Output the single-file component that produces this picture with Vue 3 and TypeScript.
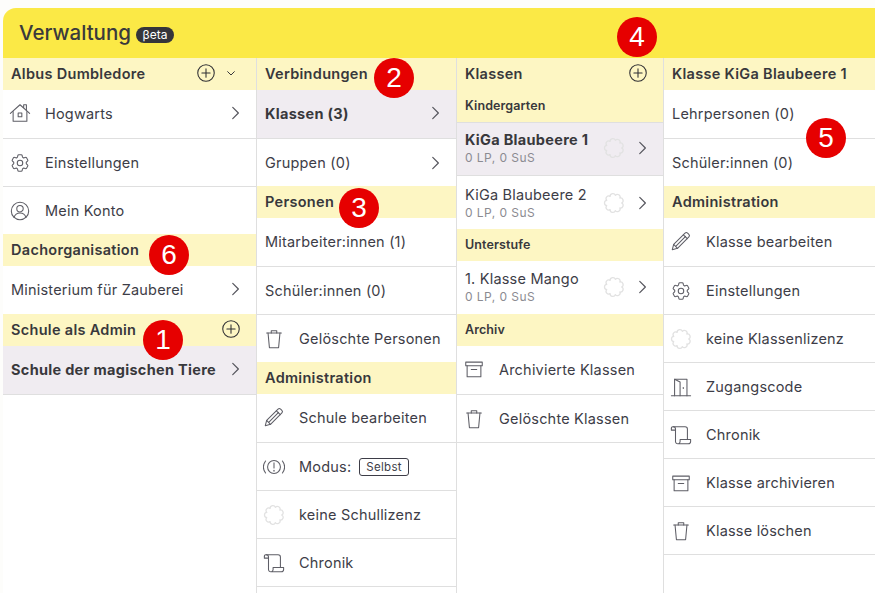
<script setup lang="ts">
import { h } from 'vue';
import type { FunctionalComponent } from 'vue';

interface Row {
  label: string;
  icon?: string;
  chevron?: boolean;
  selected?: boolean;
  sub?: string;
  seal?: boolean;
  tag?: string;
}

interface Block {
  title: string;
  small?: boolean;
  add?: boolean;
  collapse?: boolean;
  rows?: Row[];
}

// scalloped ring used for the "no licence" marker
function sealPath(): string {
  const count = 9;
  const r = 8.4;
  let d = '';
  for (let i = 0; i <= count; i++) {
    const a = (i / count) * Math.PI * 2;
    const x = (12 + r * Math.cos(a)).toFixed(2);
    const y = (12 + r * Math.sin(a)).toFixed(2);
    d += i === 0 ? `M${x} ${y}` : `A2.9 2.9 0 0 1 ${x} ${y}`;
  }
  return d + 'Z';
}

const icons: Record<string, string[]> = {
  home: ['M1.5 12.5 12 3l10.5 9.5', 'M4.5 10.5V21h15V10.5', 'M10 12h4v4h-4z', 'M16 6V3h3v6'],
  gear: [
    'M9.594 3.94c.09-.542.56-.94 1.11-.94h2.593c.55 0 1.02.398 1.11.94l.213 1.281c.063.374.313.686.645.87.074.04.147.083.22.127.325.196.72.257 1.075.124l1.217-.456a1.125 1.125 0 0 1 1.37.49l1.296 2.247a1.125 1.125 0 0 1-.26 1.431l-1.003.827c-.293.241-.438.613-.43.992a7.723 7.723 0 0 1 0 .255c-.008.378.137.75.43.991l1.004.827c.424.35.534.955.26 1.43l-1.298 2.247a1.125 1.125 0 0 1-1.369.491l-1.217-.456c-.355-.133-.75-.072-1.076.124a6.47 6.47 0 0 1-.22.128c-.331.183-.581.495-.644.869l-.213 1.281c-.09.543-.56.94-1.11.94h-2.594c-.55 0-1.019-.398-1.11-.94l-.213-1.281c-.062-.374-.312-.686-.644-.87a6.52 6.52 0 0 1-.22-.127c-.325-.196-.72-.257-1.076-.124l-1.217.456a1.125 1.125 0 0 1-1.369-.49l-1.297-2.247a1.125 1.125 0 0 1 .26-1.431l1.004-.827c.292-.24.437-.613.43-.991a6.932 6.932 0 0 1 0-.255c.007-.38-.138-.751-.43-.992l-1.004-.827a1.125 1.125 0 0 1-.26-1.43l1.297-2.247a1.125 1.125 0 0 1 1.37-.491l1.216.456c.356.133.751.072 1.076-.124.072-.044.146-.086.22-.128.332-.183.582-.495.644-.869l.214-1.28Z',
    'M15 12a3 3 0 1 1-6 0 3 3 0 0 1 6 0Z',
  ],
  user: [
    'M21.5 12a9.5 9.5 0 1 1-19 0 9.5 9.5 0 0 1 19 0Z',
    'M15.5 9.5a3.5 3.5 0 1 1-7 0 3.5 3.5 0 0 1 7 0Z',
    'M5.5 19c1-3.2 3.5-4.8 6.5-4.8s5.5 1.6 6.5 4.8',
  ],
  trash: ['M4 5.5h16', 'M9 5.5V3h6v2.5', 'M5.5 5.5 7 21.5h10l1.5-16'],
  pencil: [
    'M2.5 21.5 4 15.8 16.4 3.4a2 2 0 0 1 2.8 0l1.4 1.4a2 2 0 0 1 0 2.8L8.2 20z',
    'M14.6 5.2l4.2 4.2',
    'M4 15.8 8.2 20',
    'M6.5 17.5 17 7',
  ],
  alert: [
    'M19 12a7 7 0 1 1-14 0 7 7 0 0 1 14 0Z',
    'M12 7.5v5.5',
    'M12 15.5v1',
    'M2.8 5.5a11 11 0 0 0 0 13',
    'M21.2 5.5a11 11 0 0 1 0 13',
  ],
  scroll: [
    'M1.5 4.5v2.2H6',
    'M1.5 4.5A1.6 1.6 0 0 1 3 3h13.5a2.5 2.5 0 0 1 2.5 2.5V17',
    'M3.5 3A2.5 2.5 0 0 1 6 5.5V19a2.5 2.5 0 0 0 2.5 2.5H20a2.5 2.5 0 0 0 2.5-2.5v-2H11v2a2.5 2.5 0 0 1-2.5 2.5',
  ],
  archive: ['M3 4.5h18v4H3z', 'M4.5 8.5v12h15v-12', 'M9 12.5h6'],
  door: ['M1.5 21.5h21', 'M5 21.5V3.5h13.5v18', 'M11 21.5V6.5l-6-3', 'M14.5 12.5v1'],
  plus: ['M21 12a9 9 0 1 1-18 0 9 9 0 0 1 18 0Z', 'M12 7.5v9', 'M7.5 12h9'],
  right: ['M9 4.5 16.5 12 9 19.5'],
  down: ['M7 10l5 5 5-5'],
  seal: [sealPath()],
};

const Icon: FunctionalComponent<{ name: string; size?: number }> = (props) =>
  h(
    'svg',
    {
      viewBox: '0 0 24 24',
      width: props.size ?? 22,
      height: props.size ?? 22,
      fill: 'none',
      stroke: 'currentColor',
      'stroke-width': 1.15,
      'stroke-linecap': 'round',
      'stroke-linejoin': 'round',
    },
    (icons[props.name] ?? []).map((d) => h('path', { d })),
  );

const columns: Block[][] = [
  [
    {
      title: 'Albus Dumbledore',
      add: true,
      collapse: true,
      rows: [
        { label: 'Hogwarts', icon: 'home', chevron: true },
        { label: 'Einstellungen', icon: 'gear' },
        { label: 'Mein Konto', icon: 'user' },
      ],
    },
    { title: 'Dachorganisation', rows: [{ label: 'Ministerium für Zauberei', chevron: true }] },
    {
      title: 'Schule als Admin',
      add: true,
      rows: [{ label: 'Schule der magischen Tiere', chevron: true, selected: true }],
    },
  ],
  [
    {
      title: 'Verbindungen',
      rows: [
        { label: 'Klassen (3)', chevron: true, selected: true },
        { label: 'Gruppen (0)', chevron: true },
      ],
    },
    {
      title: 'Personen',
      rows: [
        { label: 'Mitarbeiter:innen (1)' },
        { label: 'Schüler:innen (0)' },
        { label: 'Gelöschte Personen', icon: 'trash' },
      ],
    },
    {
      title: 'Administration',
      rows: [
        { label: 'Schule bearbeiten', icon: 'pencil' },
        { label: 'Modus:', icon: 'alert', tag: 'Selbst' },
        { label: 'keine Schullizenz', icon: 'seal' },
        { label: 'Chronik', icon: 'scroll' },
      ],
    },
  ],
  [
    { title: 'Klassen', add: true },
    {
      title: 'Kindergarten',
      small: true,
      rows: [
        { label: 'KiGa Blaubeere 1', sub: '0 LP, 0 SuS', seal: true, chevron: true, selected: true },
        { label: 'KiGa Blaubeere 2', sub: '0 LP, 0 SuS', seal: true, chevron: true },
      ],
    },
    {
      title: 'Unterstufe',
      small: true,
      rows: [{ label: '1. Klasse Mango', sub: '0 LP, 0 SuS', seal: true, chevron: true }],
    },
    {
      title: 'Archiv',
      small: true,
      rows: [
        { label: 'Archivierte Klassen', icon: 'archive' },
        { label: 'Gelöschte Klassen', icon: 'trash' },
      ],
    },
  ],
  [
    {
      title: 'Klasse KiGa Blaubeere 1',
      rows: [{ label: 'Lehrpersonen (0)' }, { label: 'Schüler:innen (0)' }],
    },
    {
      title: 'Administration',
      rows: [
        { label: 'Klasse bearbeiten', icon: 'pencil' },
        { label: 'Einstellungen', icon: 'gear' },
        { label: 'keine Klassenlizenz', icon: 'seal' },
        { label: 'Zugangscode', icon: 'door' },
        { label: 'Chronik', icon: 'scroll' },
        { label: 'Klasse archivieren', icon: 'archive' },
        { label: 'Klasse löschen', icon: 'trash' },
      ],
    },
  ],
];

const markers = [
  { n: 1, cls: 'marker--1' },
  { n: 2, cls: 'marker--2' },
  { n: 3, cls: 'marker--3' },
  { n: 4, cls: 'marker--4' },
  { n: 5, cls: 'marker--5' },
  { n: 6, cls: 'marker--6' },
];
</script>

<template>
  <div class="page">
    <header class="topbar">
      <h1 class="topbar__title">Verwaltung</h1>
      <span class="topbar__beta">βeta</span>
    </header>

    <main class="columns">
      <section v-for="(blocks, c) in columns" :key="c" class="col">
        <template v-for="block in blocks" :key="block.title">
          <div class="head" :class="{ 'head--small': block.small }">
            <span class="head__title">{{ block.title }}</span>
            <Icon v-if="block.add" name="plus" class="head__add" />
            <Icon v-if="block.collapse" name="down" :size="16" class="head__down" />
          </div>
          <ul v-if="block.rows" class="list">
            <li
              v-for="row in block.rows"
              :key="row.label"
              class="row"
              :class="{ 'row--selected': row.selected, 'row--two': row.sub }"
            >
              <Icon
                v-if="row.icon"
                :name="row.icon"
                class="row__icon"
                :class="{ 'row__icon--seal': row.icon === 'seal' }"
              />
              <div class="row__text">
                <span class="row__label">{{ row.label }}</span>
                <span v-if="row.tag" class="row__tag">{{ row.tag }}</span>
                <div v-if="row.sub" class="row__sub">{{ row.sub }}</div>
              </div>
              <Icon v-if="row.seal" name="seal" class="row__seal" />
              <Icon v-if="row.chevron" name="right" :size="18" class="row__chevron" />
            </li>
          </ul>
        </template>
      </section>
    </main>

    <span v-for="m in markers" :key="m.n" class="marker" :class="m.cls">{{ m.n }}</span>
  </div>
</template>

<style scoped>
.page {
  position: relative;
  height: 593px;
  overflow: hidden;
  padding: 8px 0 0 3px;
  box-sizing: border-box;
  font-family: Inter, "Liberation Sans", sans-serif;
  color: #3d3d47;
}

.topbar {
  display: flex;
  align-items: center;
  gap: 5px;
  height: 50px;
  padding-left: 16px;
  box-sizing: border-box;
  background: #fbe946;
  border-top-left-radius: 13px;
}

.topbar__title {
  margin: 0 0 2px;
  font-size: 20.5px;
  font-weight: 500;
  color: #3a3a3c;
}

.topbar__beta {
  margin-top: 3px;
  padding: 0 6.5px;
  height: 16px;
  line-height: 16px;
  border-radius: 8px;
  background: #35353a;
  color: #fff;
  font-size: 12px;
  font-weight: 400;
}

.columns {
  display: grid;
  grid-template-columns: 254px 200px 207px 211px;
  height: 535px;
  background: #fff;
}

.col {
  border-right: 1px solid #dfdfdf;
  box-sizing: border-box;
  min-width: 0;
}

.col:last-child {
  border-right: 0;
}

.head {
  display: flex;
  align-items: center;
  height: 32px;
  padding: 0 14px 2px 8px;
  box-sizing: border-box;
  background: #fdf6c3;
  color: #38383c;
  font-size: 14.5px;
  font-weight: 600;
  letter-spacing: 0.3px;
}

.head--small {
  font-size: 12.5px;
  letter-spacing: 0.1px;
}

.head__title {
  flex: 1;
  white-space: nowrap;
}

.head__add {
  color: #2f2f33;
}

.head__down {
  margin: 0 3px 0 6px;
  color: #38383c;
  stroke-width: 1.5;
}

.list {
  margin: 0;
  padding: 0;
  list-style: none;
}

.col > .list:last-child {
  border-bottom: 1px solid #dfdfdf;
}

.row {
  display: flex;
  align-items: center;
  height: 48px;
  padding: 0 12px 2px 8px;
  box-sizing: border-box;
  background: #fff;
  font-size: 14.5px;
  letter-spacing: 0.2px;
}

.row + .row {
  padding-bottom: 0;
  border-top: 1px solid #dfdfdf;
}

.row--two {
  height: 53px;
}

.row--two + .row--two {
  height: 54px;
}

.row--two.row--selected {
  border-top: 1px solid #dfdfdf;
}

.row--selected {
  background: #f0ecf1;
}

.row--selected .row__label {
  font-weight: 700;
  letter-spacing: 0.3px;
  color: #38383c;
}

.row__icon {
  flex: none;
  margin: 0 14px 0 -2px;
  color: #5e5e66;
}

.row__icon--seal {
  color: #e2e2e2;
  stroke-width: 1.4;
}

.row__text {
  flex: 1;
  min-width: 0;
  white-space: nowrap;
}

.row__tag {
  display: inline-block;
  margin-left: 8px;
  padding: 0 6px;
  height: 18px;
  line-height: 16px;
  box-sizing: border-box;
  border: 1px solid #3d3d47;
  border-radius: 3px;
  font-size: 11.5px;
  letter-spacing: 0.3px;
  vertical-align: 1px;
}

.row__sub {
  margin-top: 3px;
  font-size: 12px;
  line-height: 14px;
  letter-spacing: 0.45px;
  color: #8b8b91;
}

.row__seal {
  flex: none;
  margin-right: 8px;
  color: #e2e2e2;
  stroke-width: 1.4;
}

.row__chevron {
  flex: none;
  color: #55555d;
  stroke-width: 1.6;
}

.marker {
  position: absolute;
  width: 40px;
  height: 40px;
  border-radius: 50%;
  background: #e60000;
  color: #fff;
  font-family: "Liberation Sans", Arial, sans-serif;
  font-size: 28px;
  line-height: 40px;
  text-align: center;
}

.marker--1 { left: 143px; top: 320px; }
.marker--2 { left: 374px; top: 58px; }
.marker--3 { left: 339px; top: 188px; }
.marker--4 { left: 617px; top: 17px; }
.marker--5 { left: 806px; top: 118px; }
.marker--6 { left: 149px; top: 235px; }
</style>

<style>
body {
  background: #fdfdfb;
}
</style>
